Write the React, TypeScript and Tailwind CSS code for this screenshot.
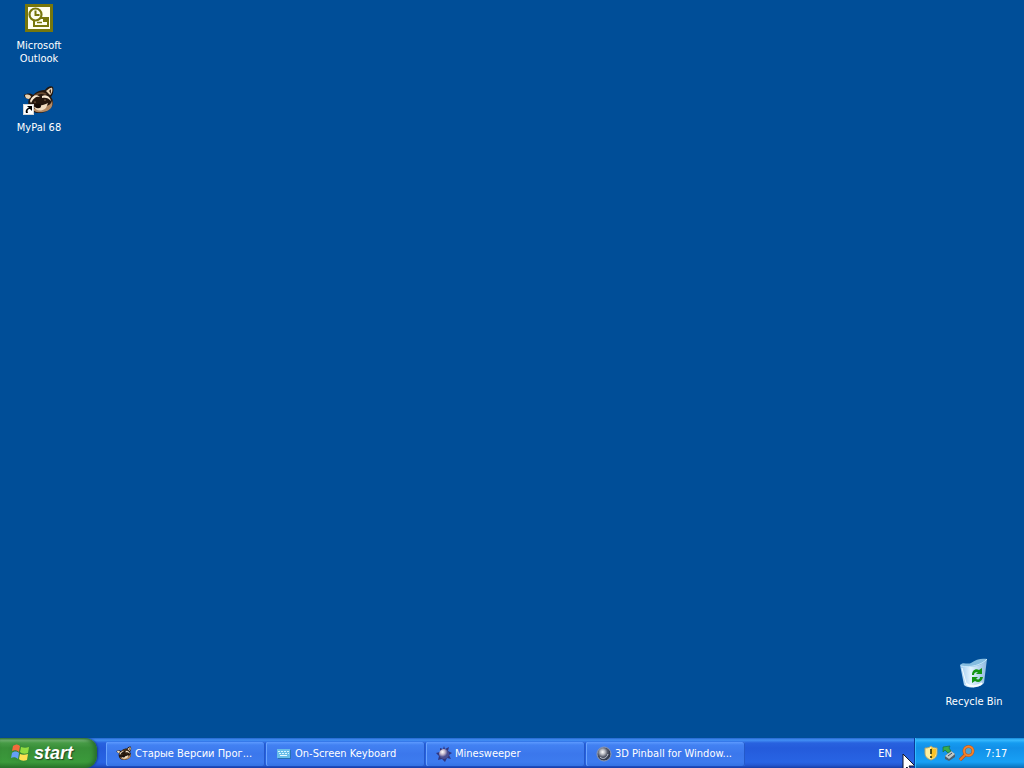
import type { ReactNode } from "react";

function OutlookIcon() {
  return (
    <svg width="28" height="28" viewBox="0 0 28 28" aria-hidden="true">
      <rect width="28" height="28" fill="#77770c" />
      <rect x="3" y="3" width="22" height="22" fill="#fffff0" />
      <rect x="9" y="14" width="14" height="8" fill="#fffff0" stroke="#77770c" strokeWidth="2" />
      <rect x="18" y="15" width="4" height="3" fill="#77770c" />
      <path d="M12 18.500h5" stroke="#77770c" strokeWidth="1.500" />
      <circle cx="10.500" cy="10.500" r="6" fill="#fffff0" stroke="#77770c" strokeWidth="2.200" />
      <path d="M10.500 6.500v4.500h4" fill="none" stroke="#77770c" strokeWidth="2" />
    </svg>
  );
}

function RaccoonHead() {
  return (
    <>
      <path d="M1 9C4 7 8 7 10 9C14 5 18 4 22 4C24 1 28-1 30 1C31 4 30 9 28 11C32 16 30 22 24 25C17 29 8 27 6 21C5 17 5 15 6 13C3 13 1 11 1 9Z" fill="#25170e" />
      <path d="M2 9C5 8 8 9 8 11L6 13C4 13 2 12 2 9ZM23 5C26 2 29 1 29 2C30 4 29 8 27 9Z" fill="#e8d3b4" />
      <path d="M26 5l2-2v5z" fill="#4c2d18" />
      <path d="M11 9C15 6 20 5 24 8L22 9C19 7 15 8 12 11Z" fill="#6a4c33" />
      <path d="M7 15C9 9 14 8 17 11C14 10 11 11 8 17ZM19 10C23 8 27 10 28 15C26 12 22 11 19 12Z" fill="#fbead2" />
      <path d="M22 20C26 20 29 17 29 14C31 21 27 25 20 26C14 27 9 25 8 21C12 24 17 23 22 20Z" fill="#b38963" />
      <path d="M11 21C14 20 19 20 25 17L23 22C18 26 13 25 11 21Z" fill="#f1dcc0" />
      <ellipse cx="15" cy="20" rx="3" ry="2.200" fill="#160c08" />
      <circle cx="12" cy="16" r=".6" fill="#d6ad82" />
      <circle cx="22" cy="14" r=".6" fill="#d6ad82" />
    </>
  );
}

function MyPalIcon() {
  return (
    <svg width="32" height="30" viewBox="0 0 32 30" aria-hidden="true">
      <g transform="translate(0 1)">
        <RaccoonHead />
      </g>
      <rect x="0.500" y="19.500" width="10" height="10" fill="#fff" stroke="#d6d6d6" />
      <path d="M3 28c-1-3 1-5 3-5l-2-2h5v5l-2-2c-2 0-3 1-2 4z" fill="#000" />
    </svg>
  );
}

function BinIcon() {
  return (
    <svg width="32" height="32" viewBox="0 0 32 32" aria-hidden="true">
      <defs>
        <linearGradient id="bin" x1="0" x2="1">
          <stop stopColor="#9bc9ee" />
          <stop offset=".4" stopColor="#e3f4ff" />
          <stop offset="1" stopColor="#8eb9e0" />
        </linearGradient>
      </defs>
      <path d="M2 7C8 8 21 4 29 1L26 25C22 30 9 31 6 27Z" fill="url(#bin)" />
      <path d="M2 7C5 3 9 7 13 5C18 1 24 0 29 1C26 8 12 11 2 7Z" fill="#86bde0" />
      <path d="M3 8C12 10 24 7 29 1" fill="none" stroke="#c7e8fb" strokeWidth="1" />
      <path d="M4 10l4 15 3 2" fill="none" stroke="#f5fcff" strokeWidth="1" />
      <path d="M8 26C13 29 20 29 24 25" fill="none" stroke="#f8fdff" strokeWidth="2" />
      <path d="M14 17C14 12 18 10 21 12L24 10V16H18L20 14C17 14 16 15 16 17Z" fill="#159515" />
      <path d="M25 19C24 24 20 25 17 23L14 25V19H20L18 21C21 22 22 21 22 19Z" fill="#159515" />
    </svg>
  );
}

function WindowsFlag() {
  return (
    <svg width="20" height="20" viewBox="0 0 20 20" className="drop-shadow-sm" aria-hidden="true">
      <path d="M3 3C6 1 8 1 10 3L9 9C7 7 4 7 2 8Z" fill="#f36b3c" />
      <path d="M11 4C14 5 16 5 19 4L18 10C15 11 12 11 10 9Z" fill="#91dc41" />
      <path d="M2 10C4 8 7 8 9 10L8 16C6 14 3 14 1 15Z" fill="#659ff7" />
      <path d="M10 11C12 12 15 12 18 11L17 17C14 18 11 18 9 16Z" fill="#ffe151" />
    </svg>
  );
}

function RaccoonSmall() {
  return (
    <svg width="16" height="16" viewBox="0 0 32 30" aria-hidden="true">
      <RaccoonHead />
    </svg>
  );
}

function KeyboardIcon() {
  return (
    <svg width="16" height="16" viewBox="0 0 16 16" aria-hidden="true">
      <path d="M2 4h13v9H2z" fill="#2871b3" />
      <path d="M1 3h13v9H1z" fill="#68bde9" />
      <path d="M2 5.500h11M3 7.500h10" stroke="#d5f5ff" strokeDasharray="2 1" />
      <path d="M4 9.500h7" stroke="#e8fbff" />
    </svg>
  );
}

function MineIcon() {
  return (
    <svg width="16" height="16" viewBox="0 0 16 16" aria-hidden="true">
      <defs>
        <radialGradient id="mine" cx=".35" cy=".3">
          <stop stopColor="#fff" />
          <stop offset=".5" stopColor="#c1b5cb" />
          <stop offset="1" stopColor="#4a4e91" />
        </radialGradient>
      </defs>
      <path d="M8 0l1 3 4-2-1 4 4 2-3 2 2 4-4-1-2 4-3-3-4 1 1-4-3-3 4-1 0-4 3 1z" fill="#30367f" />
      <circle cx="8" cy="8" r="5" fill="url(#mine)" />
    </svg>
  );
}

function PinballIcon() {
  return (
    <svg width="16" height="16" viewBox="0 0 16 16" aria-hidden="true">
      <defs>
        <radialGradient id="ball" cx=".4" cy=".36">
          <stop stopColor="#fff" />
          <stop offset=".35" stopColor="#b7bac2" />
          <stop offset=".7" stopColor="#565b6b" />
          <stop offset="1" stopColor="#353d50" />
        </radialGradient>
      </defs>
      <circle cx="8" cy="8" r="7" fill="url(#ball)" stroke="#8f9bb5" />
      <path d="M4 11c3 3 7 1 8-3" fill="none" stroke="#c2c9d4" />
    </svg>
  );
}

function ShieldIcon() {
  return (
    <svg width="16" height="16" viewBox="0 0 16 16" aria-hidden="true">
      <path d="M8 1C6 3 4 3 2 3v5c0 4 3 6 6 7 3-1 6-3 6-7V3c-2 0-4 0-6-2z" fill="#fff0a0" stroke="#b3a46a" />
      <path d="M8 2v12c3-1 5-3 5-6V4c-2 0-4-1-5-2z" fill="#fac329" />
      <path d="M8 4v5M8 11v2" stroke="#263010" strokeWidth="1.600" />
    </svg>
  );
}

function RemoveHardwareIcon() {
  return (
    <svg width="16" height="16" viewBox="0 0 16 16" aria-hidden="true">
      <path d="M4 11l6-5 4 3v3l-6 4-4-2z" fill="#4b6070" />
      <path d="M4 11l6-5 4 3-6 5z" fill="#bec9c9" />
      <path d="M7 11l4-3" stroke="#38495a" />
      <path d="M2 2l7-1-1 2 2 3-3 2-3-3-2 2z" fill="#38ad4a" stroke="#1a7040" strokeWidth=".7" />
    </svg>
  );
}

function MagnifierIcon() {
  return (
    <svg width="16" height="16" viewBox="0 0 16 16" aria-hidden="true">
      <path d="M6 10l-5 5" stroke="#a5552c" strokeWidth="3.400" />
      <circle cx="9.500" cy="6" r="4.500" fill="#51a4d1" stroke="#a5552c" strokeWidth="3" />
      <circle cx="9.500" cy="6" r="4.500" fill="none" stroke="#f58228" strokeWidth="2" />
      <path d="M6 10l-5 5" stroke="#f07a22" strokeWidth="2" />
    </svg>
  );
}

function Shortcut({ icon, children }: { icon: ReactNode; children: ReactNode }) {
  return (
    <button type="button" className="flex w-[76px] flex-col items-center gap-[5px] text-[11px] leading-[13px] text-white">
      <span className="flex h-8 items-center justify-center">{icon}</span>
      <span className="text-center">{children}</span>
    </button>
  );
}

const tasks = [
  { icon: <RaccoonSmall />, title: "Старые Версии Прог..." },
  { icon: <KeyboardIcon />, title: "On-Screen Keyboard" },
  { icon: <MineIcon />, title: "Minesweeper" },
  { icon: <PinballIcon />, title: "3D Pinball for Window..." },
];

export default function App() {
  return (
    <div className="relative flex min-h-screen flex-col overflow-hidden bg-[#004e98] font-['Tahoma','DejaVu_Sans_Condensed','DejaVu_Sans',sans-serif]">
      <main className="flex flex-1 justify-between">
        <div className="flex flex-col gap-[19px] pt-0.5 pl-px">
          <Shortcut icon={<OutlookIcon />}>Microsoft<br />Outlook</Shortcut>
          <Shortcut icon={<MyPalIcon />}>MyPal 68</Shortcut>
        </div>
        <div className="flex items-end pr-3 pb-[30px]">
          <Shortcut icon={<BinIcon />}>Recycle Bin</Shortcut>
        </div>
      </main>
      <footer className="flex h-[30px] shrink-0 bg-[linear-gradient(to_bottom,#2465ce_0px,#4391f5_2px,#2862df_5px,#245bdb_10px,#2864e4_24px,#2459d3_27px,#173da7_30px)] text-[11px] text-white">
        <button type="button" className="flex w-[97px] items-center gap-0.5 rounded-r-xl bg-[linear-gradient(to_bottom,#38783b_0px,#75b575_2px,#479b46_5px,#388f38_10px,#3b9a3b_24px,#29772b_30px)] pl-2.5 shadow-[inset_-3px_0_4px_#286e2b,1px_0_2px_#173b8e]">
          <WindowsFlag />
          <span className="pl-0.5 font-['Liberation_Sans',Arial,sans-serif] text-lg leading-5 font-bold italic [text-shadow:1px_1px_1px_#244323]">start</span>
        </button>
        <nav aria-label="Open windows" className="flex min-w-0 flex-1 gap-px pt-1 pb-0.5 pl-[9px]">
          {tasks.map((task) => (
            <button type="button" key={task.title} className="flex w-[159px] min-w-0 items-center gap-[3px] rounded-xs bg-[linear-gradient(to_bottom,#5d9aff_0px,#4281f2_3px,#3b77ec_12px,#3d7bef_20px,#3473e4_24px)] pl-2.5 text-left whitespace-nowrap shadow-[inset_1px_0_#69a4ff,inset_-1px_0_#2459c9]">
              <span className="shrink-0">{task.icon}</span>
              <span>{task.title}</span>
            </button>
          ))}
        </nav>
        <button type="button" aria-label="Input language: English" className="w-[58px] shrink-0 pt-0.5">EN</button>
        <div className="flex w-[110px] shrink-0 items-center border-l border-[#0b3b99] bg-[linear-gradient(to_bottom,#1685d7_0px,#38baff_2px,#159bf0_5px,#1290e8_10px,#18a0f5_24px,#0d80cd_28px,#0e6bb5_30px)] pl-2 shadow-[inset_1px_0_#34bdff]">
          <div className="flex gap-0.5">
            <ShieldIcon />
            <RemoveHardwareIcon />
            <MagnifierIcon />
          </div>
          <time className="pt-0.5 pl-2.5">7:17</time>
        </div>
      </footer>
      <svg className="pointer-events-none absolute right-[110px] bottom-0" width="12" height="15" viewBox="0 0 12 15" aria-hidden="true">
        <path d="M1 1v17l4-4 3 5 2-1-3-5h6z" fill="#fff" stroke="#101528" />
      </svg>
    </div>
  );
}
